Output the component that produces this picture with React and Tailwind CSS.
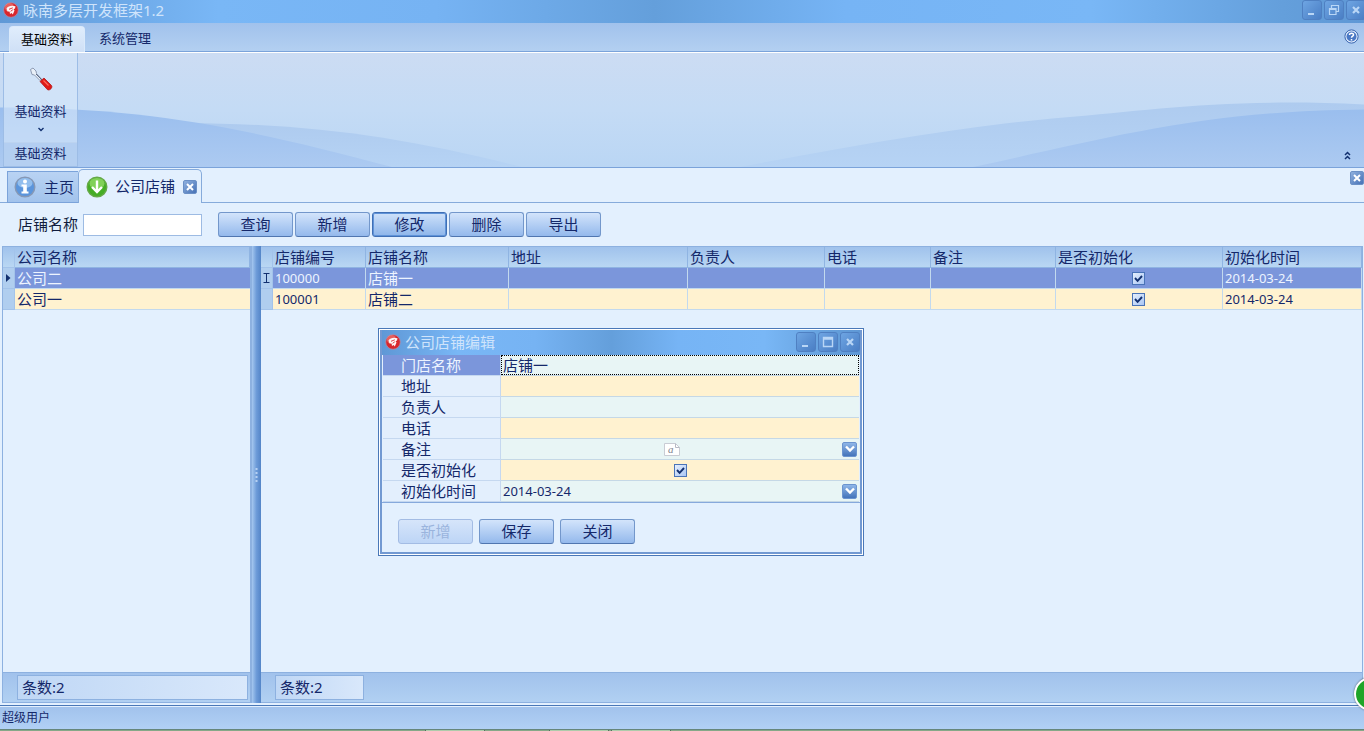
import { useState } from 'react'
import clsx from 'clsx'

const COMPANIES = ['公司二', '公司一']

const COLUMNS = [
  { key: 'code', label: '店铺编号', width: 'w-[93px]' },
  { key: 'name', label: '店铺名称', width: 'w-[143px]' },
  { key: 'address', label: '地址', width: 'w-[179px]' },
  { key: 'owner', label: '负责人', width: 'w-[137px]' },
  { key: 'phone', label: '电话', width: 'w-[106px]' },
  { key: 'note', label: '备注', width: 'w-[125px]' },
  { key: 'ready', label: '是否初始化', width: 'w-[167px]' },
  { key: 'readyAt', label: '初始化时间', width: '' },
]

const SHOPS = [
  { code: '100000', name: '店铺一', ready: true, readyAt: '2014-03-24' },
  { code: '100001', name: '店铺二', ready: true, readyAt: '2014-03-24' },
]

const ACTIONS = ['查询', '新增', '修改', '删除', '导出']

const titleBg = 'bg-[linear-gradient(90deg,#5f98d6_0%,#79b7f6_16%,#76b3f3_32%,#649fdb_48%,#76b4f5_62%,#79b7f6_80%,#649fdb_94%,#5f98d6_100%)]'
const headBg = 'bg-linear-to-b from-[#a0c2ec] to-[#b9d7f3]'

function AppIcon() {
  return (
    <svg width="16" height="16" viewBox="0 0 16 16" className="shrink-0">
      <circle cx="8" cy="8" r="7.3" fill="#d8262c" stroke="#b08aa8" strokeWidth="0.8" />
      <circle cx="6.5" cy="5.5" r="4.6" fill="#f3857f" opacity="0.6" />
      <path d="M3.5 6.5C5 3.800 9 3 12.500 4.200L12 6.500 10.500 7.200 11.500 8.500 9.800 12.500 8.600 11 7 12 6.600 9.600 4.400 9.200Z" fill="#fff" opacity="0.95" />
      <path d="M6 7.300 9.800 5.800M7.600 9.300 9.800 7.800" stroke="#d8262c" strokeWidth="0.9" />
    </svg>
  )
}

function WinGlyph({ type }) {
  return (
    <svg width="12" height="12" viewBox="0 0 12 12" fill="none" stroke="#b9d6f6" strokeWidth="1.4">
      {type === 'min' && <path d="M2 10h6" strokeWidth="2" />}
      {type === 'max' && <path d="M1.5 1.5h9v9h-9zM1 3h10" />}
      {type === 'restore' && <path d="M3.5 4V1.5h7v6H8M1.5 4.5h6.5v6H1.5zM1.5 5.5H8" strokeWidth="1.2" />}
      {type === 'close' && <path d="M3 3l6 6M9 3l-6 6" strokeWidth="2.2" />}
    </svg>
  )
}

function WinButton({ type, label }) {
  return (
    <button aria-label={label} className="flex size-5 shrink-0 items-center justify-center rounded-[3px] border border-[#4f80c2] bg-linear-to-br from-[#6ea5e3] to-[#4a7ec4]">
      <WinGlyph type={type} />
    </button>
  )
}

function CloseBox({ label }) {
  return (
    <button aria-label={label} className="flex size-[14px] shrink-0 items-center justify-center rounded-[2px] border border-[#6b90c6] bg-linear-to-br from-[#8fb0de] to-[#4772b6]">
      <svg width="8" height="8" viewBox="0 0 8 8" stroke="#fff" strokeWidth="2">
        <path d="M1 1l6 6M7 1L1 7" />
      </svg>
    </button>
  )
}

function PushButton({ children, active, disabled }) {
  return (
    <button
      disabled={disabled}
      className={clsx(
        'h-[25px] w-[75px] rounded-[3px] border text-[15px] leading-[21px]',
        active && 'border-[#3f6fb5] bg-linear-to-b from-[#cfe2fa] to-[#8db5ea] shadow-[inset_0_0_0_1px_#5f93d8]',
        disabled && 'border-[#a3bce4] bg-linear-to-b from-[#d6e5fa] to-[#bdd5f6] text-[#9ab4dd]',
        !active && !disabled && 'border-[#7397cb] border-b-[#5076b0] bg-linear-to-b from-[#d3e4fb] to-[#94b9ec]',
      )}
    >
      {children}
    </button>
  )
}

function Tick({ id, label, defaultChecked }) {
  const [on, setOn] = useState(!!defaultChecked)
  return (
    <span className="relative inline-flex size-[13px]">
      <input
        id={id}
        type="checkbox"
        aria-label={label}
        checked={on}
        onChange={e => setOn(e.target.checked)}
        className="size-[13px] appearance-none border border-[#4a74b8] bg-linear-to-br from-[#e6effc] to-[#a9c6f4]"
      />
      {on && (
        <svg width="13" height="13" viewBox="0 0 13 13" className="pointer-events-none absolute inset-0" fill="none" stroke="#12306f" strokeWidth="1.9">
          <path d="M3 6l2.6 2.8L10 4" />
        </svg>
      )}
    </span>
  )
}

function DropButton({ label }) {
  return (
    <button aria-label={label} className="mr-[2px] flex size-[15px] shrink-0 items-center justify-center rounded-[2px] border border-[#6b94cf] bg-linear-to-b from-[#8fb6e8] to-[#4474ba]">
      <svg width="10" height="8" viewBox="0 0 10 8" fill="none" stroke="#fff" strokeWidth="2.4">
        <path d="M1 1.5l4 4 4-4" />
      </svg>
    </button>
  )
}

function TitleBar() {
  return (
    <header className={clsx('flex h-[23px] items-start justify-between overflow-hidden pl-[3px]', titleBg)}>
      <div className="flex h-5 items-center gap-1">
        <AppIcon />
        <h1 className="text-[15px] leading-5 text-[#cfe4fb]">咏南多层开发框架1.2</h1>
      </div>
      <div className="-mr-[2px] flex gap-[2px]">
        <WinButton type="min" label="最小化" />
        <WinButton type="restore" label="还原" />
        <WinButton type="close" label="关闭" />
      </div>
    </header>
  )
}

function RibbonTabs() {
  return (
    <nav className="flex h-[29px] items-end justify-between border-b border-[#7ba3da] bg-linear-to-b from-[#a1c2ec] to-[#b3d0f1] pl-[9px] text-[13px]">
      <div className="flex items-end">
        <button className="-mb-px h-[26px] w-[76px] rounded-t-[4px] border border-b-0 border-[#dbeafb] bg-linear-to-b from-[#e0edfc] to-[#cfe0f6] text-black">基础资料</button>
        <button className="h-6 w-20">系统管理</button>
      </div>
      <button aria-label="帮助" className="mr-[5px] mb-[7px]">
        <svg width="15" height="15" viewBox="0 0 15 15" fill="none">
          <circle cx="7.5" cy="7.5" r="6.6" fill="#e6f0fd" stroke="#3663ae" />
          <circle cx="7.5" cy="7.5" r="5" fill="#4a78c4" />
          <path d="M5.5 6C5.5 3.6 9.6 3.7 9.5 6 9.4 7.3 7.6 7.2 7.5 8.8M7.5 10v1.5" stroke="#fff" strokeWidth="1.5" />
        </svg>
      </button>
    </nav>
  )
}

function Screwdriver() {
  return (
    <svg width="24" height="25" viewBox="0 0 24 25" fill="none">
      <path d="M1.5 2.5L4 1l3 3 .5 2.5L12.5 12l-1.5 1.5-5.5-5.5L3 7.5z" fill="#e9f0f8" stroke="#8492aa" strokeWidth="0.9" />
      <path d="M7 7l6 6" stroke="#5c6b88" />
      <path d="M11 14.5l4-3.5 7.5 7.5c1.4 2-1.6 5.4-4 4.2z" fill="#e01a17" stroke="#b01a1c" strokeWidth="0.8" />
      <path d="M14.5 13.5l5 5" stroke="#ff6a5a" strokeWidth="1.2" />
    </svg>
  )
}

function Ribbon() {
  return (
    <section className="relative flex h-[116px] items-stretch justify-between border-t border-b border-t-white border-b-[#7ba3da] bg-linear-to-b from-[#ccdcf3] via-[#c4dbf5] to-[#bad6f4] pl-[3px]">
      <svg viewBox="0 0 1364 115" preserveAspectRatio="none" className="absolute inset-0 size-full">
        <defs>
          <linearGradient id="deep" x1="0" y1="0" x2="0" y2="1">
            <stop offset="0" stopColor="#9abeee" />
            <stop offset="1" stopColor="#accaf1" />
          </linearGradient>
          <linearGradient id="pale" x1="0" y1="0" x2="0" y2="1">
            <stop offset="0" stopColor="#aecbef" />
            <stop offset="1" stopColor="#b6d3f4" />
          </linearGradient>
        </defs>
        <path d="M160 71C300 69 400 84 522 115H160Z" fill="url(#pale)" />
        <path d="M0 55C150 55 250 77 392 115H0Z" fill="url(#deep)" />
        <path d="M740 115C880 88 980 72 1064 65S1230 45 1364 52V115Z" fill="url(#pale)" />
        <path d="M973 115C1100 88 1200 58 1364 57V115Z" fill="url(#deep)" />
      </svg>
      <div className="relative flex w-[75px] flex-col border border-t-0 border-[#9dbde6] bg-[#d7e7fa]/60 text-[13px]">
        <button className="flex flex-1 flex-col items-center pt-[14px]">
          <Screwdriver />
          <span className="mt-[9px] leading-5">基础资料</span>
          <svg width="6" height="5" viewBox="0 0 6 5" fill="none" stroke="#12306f" strokeWidth="1.4" className="mt-[6px]">
            <path d="M.5 1L3 3.5 5.500 1" />
          </svg>
        </button>
        <div className="h-[24px] border-t border-[#bcd3f0] bg-[#a9c7ef]/60 text-center leading-5">基础资料</div>
      </div>
      <button aria-label="折叠功能区" className="relative mr-[13px] mb-[7px] self-end">
        <svg width="7" height="9" viewBox="0 0 7 9" fill="none" stroke="#12306f" strokeWidth="1.5">
          <path d="M1 4l2.500-2.500L6 4M1 8l2.500-2.500L6 8" />
        </svg>
      </button>
    </section>
  )
}

function DocTabs() {
  return (
    <div className="flex h-[35px] items-end justify-between border-b border-[#86abdb] pl-[7px]">
      <div className="-mb-px flex items-end">
        <button className="flex h-8 w-[71px] items-center gap-2 border border-r-0 border-[#7ba3da] bg-linear-to-b from-[#b9d3f3] to-[#a2c3ec] pl-[6px] text-[15px]">
          <svg width="22" height="22" viewBox="0 0 22 22" className="shrink-0">
            <circle cx="11" cy="11" r="9.800" fill="#5b95dc" stroke="#8698b5" strokeWidth="1.4" />
            <ellipse cx="11" cy="7" rx="7.500" ry="5" fill="#a9d0f5" opacity="0.7" />
            <circle cx="11" cy="5.500" r="2" fill="#fff" />
            <path d="M7.500 8.500h5.300v7h1.700v2H7.500v-2h1.700v-5H7.500z" fill="#fff" />
          </svg>
          <span className="whitespace-nowrap">主页</span>
        </button>
        <div className="flex h-[34px] w-[124px] items-center rounded-t-[5px] border border-b-0 border-[#86abdb] bg-[#e3f0fe] pl-[7px]">
          <svg width="22" height="22" viewBox="0 0 22 22" className="shrink-0">
            <circle cx="11" cy="11" r="9.800" fill="#45ad25" stroke="#65a947" strokeWidth="1.4" />
            <ellipse cx="11" cy="7.500" rx="7.500" ry="5.500" fill="#9bdf6e" opacity="0.7" />
            <path d="M11 4.500v11M6 11l5 5 5-5" fill="none" stroke="#fff" strokeWidth="2.400" />
          </svg>
          <button className="mr-2 ml-[7px] text-[15px] whitespace-nowrap">公司店铺</button>
          <CloseBox label="关闭公司店铺" />
        </div>
      </div>
      <div className="self-start pt-[3px]"><CloseBox label="关闭页面" /></div>
    </div>
  )
}

function Toolbar() {
  return (
    <form className="flex h-[43px] items-center pl-[18px]" onSubmit={e => e.preventDefault()}>
      <label htmlFor="shop-name" className="w-[65px] text-[15px] text-[#101c3c]">店铺名称</label>
      <input id="shop-name" className="mr-4 h-[22px] w-[119px] border border-[#9dbbe3] bg-white px-1 text-[13px] outline-none" />
      <div className="flex gap-[2px]">
        {ACTIONS.map(a => <PushButton key={a} active={a === '修改'}>{a}</PushButton>)}
      </div>
    </form>
  )
}

function Marker({ children, head }) {
  return (
    <td className={clsx('border-r border-b border-[#a3c3ea] p-0', head ? headBg : 'bg-[#b0ceef]')}>
      <div className="flex justify-center">{children}</div>
    </td>
  )
}

const headCell = 'truncate border-r border-b border-[#8fb4e2] p-0 pl-[2px] text-left font-normal leading-5'

function Footer({ className, count }) {
  return (
    <div className="h-[30px] border-t border-[#8db1e0] bg-linear-to-b from-[#a1c2ec] to-[#b1d0f2] pt-[2px] pr-[2px] pl-[14px]">
      <div className={clsx('h-[25px] border border-[#8db1e0] bg-linear-to-r from-[#bfd7f5] to-[#d9e8fb] pl-1 leading-[23px]', className)}>条数:{count}</div>
    </div>
  )
}

function CompanyGrid() {
  return (
    <section className="flex w-[249px] shrink-0 flex-col border border-[#8db1e0] text-[15px]">
      <table className="w-full table-fixed border-separate border-spacing-0">
        <colgroup><col className="w-3" /><col /></colgroup>
        <thead>
          <tr className="h-[21px]">
            <Marker head />
            <th className={clsx(headCell, headBg)}>公司名称</th>
          </tr>
        </thead>
        <tbody>
          {COMPANIES.map((c, i) => (
            <tr key={c} className="h-[21px]">
              <Marker>
                {i === 0 && <svg width="5" height="8" viewBox="0 0 5 8"><path d="M0 0l4.500 4L0 8z" fill="#12306f" /></svg>}
              </Marker>
              <td className={clsx('border-b border-[#c2d9ee] p-0 pl-[2px] leading-5', i === 0 ? 'bg-[#7b96db] text-[#edf4ff]' : 'bg-[#fff2d0]')}>{c}</td>
            </tr>
          ))}
        </tbody>
      </table>
      <div className="flex-1" />
      <Footer count={COMPANIES.length} />
    </section>
  )
}

function ShopGrid() {
  return (
    <section className="flex min-w-0 flex-1 flex-col border-t border-r border-b border-[#8db1e0] text-[15px]">
      <table className="w-full table-fixed border-separate border-spacing-0">
        <colgroup>
          <col className="w-3" />
          {COLUMNS.map(c => <col key={c.key} className={c.width} />)}
        </colgroup>
        <thead>
          <tr className="h-[21px]">
            <Marker head />
            {COLUMNS.map(c => <th key={c.key} className={clsx(headCell, headBg)}>{c.label}</th>)}
          </tr>
        </thead>
        <tbody>
          {SHOPS.map((s, i) => (
            <tr key={s.code} className={clsx('h-[21px]', i === 0 ? 'bg-[#7b96db] text-[#edf4ff]' : 'bg-[#fff2d0]')}>
              <Marker>
                {i === 0 && <svg width="7" height="10" viewBox="0 0 7 10" fill="none" stroke="#12306f"><path d="M.5.5h6M.5 9.500h6M3.500.5v9" /></svg>}
              </Marker>
              {COLUMNS.map(c => (
                <td key={c.key} className={clsx('truncate border-r border-b border-[#c2d9ee] p-0 leading-5', c.key === 'ready' ? 'pr-[2px]' : 'pl-[2px]', (c.key === 'code' || c.key === 'readyAt') && 'text-[13px]')}>
                  {c.key === 'ready'
                    ? <div className="flex justify-center"><Tick label={`${s.name} ${c.label}`} defaultChecked={s.ready} /></div>
                    : s[c.key]}
                </td>
              ))}
            </tr>
          ))}
        </tbody>
      </table>
      <div className="flex-1" />
      <Footer count={SHOPS.length} className="w-[89px]" />
    </section>
  )
}

function Field({ id, label, index, current, children }) {
  return (
    <div className="flex h-[21px]">
      <label
        htmlFor={id}
        className={clsx('w-[118px] shrink-0 border-r border-b border-[#c5d8f0] pl-[18px] leading-5', current ? 'bg-[#7b96db] text-[#edf4ff]' : 'bg-[#e3effd]')}
      >
        {label}
      </label>
      <div className={clsx('flex min-w-0 flex-1 items-center border-b border-[#c5d8e6]', index % 2 ? 'bg-[#fff2d0]' : 'bg-[#e8f5f5]')}>
        {children}
      </div>
    </div>
  )
}

const fieldInput = 'h-5 w-full min-w-0 bg-transparent px-[2px] outline-none'

function EditDialog() {
  return (
    <div role="dialog" aria-label="公司店铺编辑" className="absolute top-[328px] left-[378px] w-[486px] border border-[#4a78b8] bg-white p-px text-[15px]">
      <div className="border-2 border-t-0 border-[#7299d2] bg-[#e3f0fe]">
        <div className={clsx('flex h-[25px] items-start justify-between pt-[2px] pl-[3px]', titleBg)}>
          <div className="flex h-5 items-center gap-1">
            <AppIcon />
            <h2 className="leading-5 text-[#cfe4fb]">公司店铺编辑</h2>
          </div>
          <div className="flex gap-[2px]">
            <WinButton type="min" label="最小化" />
            <WinButton type="max" label="最大化" />
            <WinButton type="close" label="关闭" />
          </div>
        </div>
        <div className="border-b border-[#86a9dc] px-px">
          <Field id="f-name" label="门店名称" index={0} current>
            <input id="f-name" defaultValue="店铺一" className="h-5 w-full min-w-0 border border-dotted border-black bg-transparent px-[1px] outline-none" />
          </Field>
          <Field id="f-address" label="地址" index={1}><input id="f-address" className={fieldInput} /></Field>
          <Field id="f-owner" label="负责人" index={2}><input id="f-owner" className={fieldInput} /></Field>
          <Field id="f-phone" label="电话" index={3}><input id="f-phone" className={fieldInput} /></Field>
          <Field id="f-note" label="备注" index={4}>
            <button id="f-note" className="flex flex-1 justify-center">
              <svg width="16" height="13" viewBox="0 0 16 13" fill="none">
                <path d="M.5.5h11l4 4v8H.5z" fill="#fff" stroke="#c9ccd4" />
                <path d="M11.500.5v4h4" stroke="#b7bac4" />
                <text x="4" y="10" fontSize="11" fontStyle="italic" fontFamily="Liberation Serif, serif" fill="#7d7f8c">a</text>
              </svg>
            </button>
            <DropButton label="展开备注" />
          </Field>
          <Field id="f-ready" label="是否初始化" index={5}>
            <div className="flex flex-1 justify-center"><Tick id="f-ready" defaultChecked /></div>
          </Field>
          <Field id="f-ready-at" label="初始化时间" index={6}>
            <input id="f-ready-at" defaultValue="2014-03-24" className={clsx(fieldInput, 'text-[13px]')} />
            <DropButton label="选择日期" />
          </Field>
        </div>
        <div className="flex gap-[6px] px-4 pt-4 pb-2">
          <PushButton disabled>新增</PushButton>
          <PushButton>保存</PushButton>
          <PushButton>关闭</PushButton>
        </div>
      </div>
    </div>
  )
}

export default function App() {
  return (
    <div className="relative flex min-h-screen flex-col overflow-hidden bg-[#e3f0fe] font-['Noto_Sans','Noto_Sans_CJK_SC',sans-serif] text-[#14286a]">
      <TitleBar />
      <RibbonTabs />
      <Ribbon />
      <DocTabs />
      <Toolbar />
      <main className="flex flex-1 pr-px pl-[2px]">
        <CompanyGrid />
        <div className="flex w-[10px] shrink-0 items-center justify-center border-l border-[#8db1e0] bg-linear-to-r from-[#a5c7ef] via-[#6d9bd8] to-[#5485c8]">
          <svg width="3" height="14" viewBox="0 0 3 14" stroke="#b5d0f2" strokeWidth="2" strokeDasharray="2 2"><path d="M1.500 0v14" /></svg>
        </div>
        <ShopGrid />
      </main>
      <footer className="mt-[2px] h-6 border-t border-[#4a78b8] bg-linear-to-b from-[#a1c2ec] to-[#b1d0f5] pl-[2px] text-xs leading-6 shadow-[inset_0_1px_0_#e3f0fe]">超级用户</footer>
      <div className="flex h-[2px] border-t border-[#66867c] bg-[#86a888]">
        <div className="ml-[425px] w-[60px] border-x border-[#55705f] bg-[#aecbab]" />
        <div className="ml-16 w-[60px] border-x border-[#55705f] bg-[#aecbab]" />
        <div className="ml-[2px] w-[60px] border-x border-[#55705f] bg-[#aecbab]" />
      </div>
      <EditDialog />
      <div className="absolute -right-6 bottom-5 size-[34px] rounded-full border-2 border-white bg-[#1fa528] shadow-[0_0_2px_#456]" />
    </div>
  )
}
